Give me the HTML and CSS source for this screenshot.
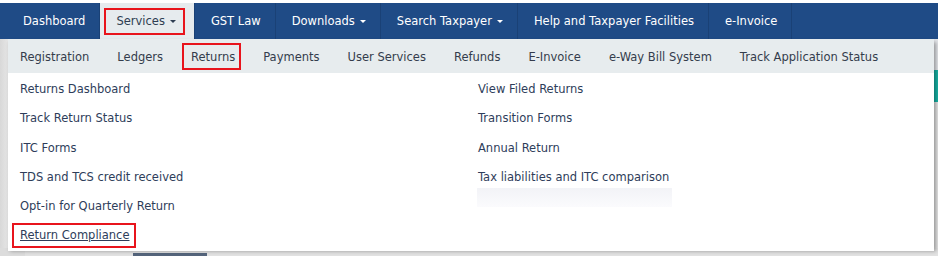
FILE: index.html
```html
<!DOCTYPE html>
<html>
<head>
<meta charset="utf-8">
<link rel="stylesheet" href="styles.css">
</head>
<body>
<div class="topstrip"></div>
<nav class="mainnav">
  <a class="tab tab-dash">Dashboard</a>
  <a class="tab tab-active"><span class="redbox redbox-services">Services<span class="caret"></span></span></a>
  <a class="tab">GST Law</a>
  <a class="tab">Downloads<span class="caret"></span></a>
  <a class="tab">Search Taxpayer<span class="caret"></span></a>
  <a class="tab">Help and Taxpayer Facilities</a>
  <a class="tab">e-Invoice</a>
</nav>
<div class="stage">
  <div class="menuwrap">
    <ul class="submenu">
      <li>Registration</li>
      <li>Ledgers</li>
      <li><span class="redbox redbox-returns">Returns</span></li>
      <li>Payments</li>
      <li>User Services</li>
      <li>Refunds</li>
      <li>E-Invoice</li>
      <li>e-Way Bill System</li>
      <li>Track Application Status</li>
    </ul>
    <div class="dropdown">
      <ul class="col col-left">
        <li>Returns Dashboard</li>
        <li>Track Return Status</li>
        <li>ITC Forms</li>
        <li>TDS and TCS credit received</li>
        <li>Opt-in for Quarterly Return</li>
        <li><a class="redbox redbox-compliance">Return Compliance</a></li>
      </ul>
      <ul class="col col-right">
        <li>View Filed Returns</li>
        <li>Transition Forms</li>
        <li>Annual Return</li>
        <li>Tax liabilities and ITC comparison</li>
        <li class="ghost"></li>
      </ul>
    </div>
  </div>
  <div class="sidecol">
    <div class="side-light"></div>
    <div class="side-teal"></div>
  </div>
</div>
<div class="below">
  <div class="below-bar"></div>
</div>
</body>
</html>
```

FILE: styles.css
```css
* { box-sizing: border-box; }
html, body { margin: 0; padding: 0; }
body {
  width: 938px;
  height: 256px;
  overflow: hidden;
  background: #ffffff;
  font-family: "DejaVu Sans", Verdana, sans-serif;
  font-size: 11.5px;
}
ul { list-style: none; margin: 0; padding: 0; }
a { text-decoration: none; color: inherit; }

.topstrip { height: 3px; background: #ffffff; }

.mainnav {
  display: flex;
  height: 36px;
  background: #1f4b86;
  padding-left: 2px;
}
.tab {
  display: flex;
  align-items: center;
  color: #ffffff;
  padding: 0 14px 0 16px;
  border-right: 1px solid #1a4176;
  white-space: nowrap;
}
.tab-dash { padding-left: 21px; padding-right: 14px; }
.tab-active {
  background: #e6ebee;
  color: #2e3d52;
  padding: 0 9px 0 4px;
}
.caret {
  display: inline-block;
  width: 0; height: 0;
  border-left: 3px solid transparent;
  border-right: 3px solid transparent;
  border-top: 3px solid currentColor;
  vertical-align: middle;
  margin-left: 5px;
}
.redbox { border: 2px solid #e8141c; }
.redbox-services { padding: 4px 7px 5px 10px; }

.stage {
  display: flex;
  height: 209px;
  background: linear-gradient(to right, #d8d8d8, #e6e6e6 8px);
}
.menuwrap {
  margin-left: 8px;
  width: 926px;
  display: flex;
  flex-direction: column;
  box-shadow: 2px 3px 4px rgba(0,0,0,0.35);
  position: relative;
  z-index: 2;
}
.submenu {
  display: flex;
  height: 34px;
  flex: none;
  align-items: center;
  background: #e7ecee;
  padding: 2px 0 0 12px;
  color: #343c4c;
  gap: 28px;
}
.submenu li { white-space: nowrap; }
.redbox-returns {
  padding: 5px 4px 4px 7px;
  margin-left: -9px;
  margin-right: -6px;
}

.dropdown {
  flex: 1;
  background: #ffffff;
  display: grid;
  grid-template-columns: 458px 1fr;
  align-content: start;
  padding: 2px 0 0 12px;
  color: #2e3d5a;
}
.col li {
  line-height: 29.3px;
  height: 29.3px;
  white-space: nowrap;
}
.redbox-compliance {
  display: inline-block;
  text-decoration: underline;
  line-height: 21px;
  padding: 0 4px 0 6px;
  margin-left: -8px;
}
.ghost {
  margin-top: -4px;
  width: 195px;
  height: 19px !important;
  margin-left: -1px;
  background: linear-gradient(to bottom, #f2f3f7, #fbfbfd);
}

.sidecol {
  flex: 1;
  display: flex;
  flex-direction: column;
}
.side-light { height: 31px; background: #e4e6ea; }
.side-teal { height: 32px; background: #17b3a6; }

.below {
  height: 8px;
  background: #e2e2e2;
  position: relative;
  display: flex;
  align-items: flex-end;
  padding-left: 133px;
  border-left: 25px solid #dcdcdc;
}
.below-bar {
  width: 74px;
  height: 3px;
  margin-left: -25px;
  background: #55657c;
}
```
